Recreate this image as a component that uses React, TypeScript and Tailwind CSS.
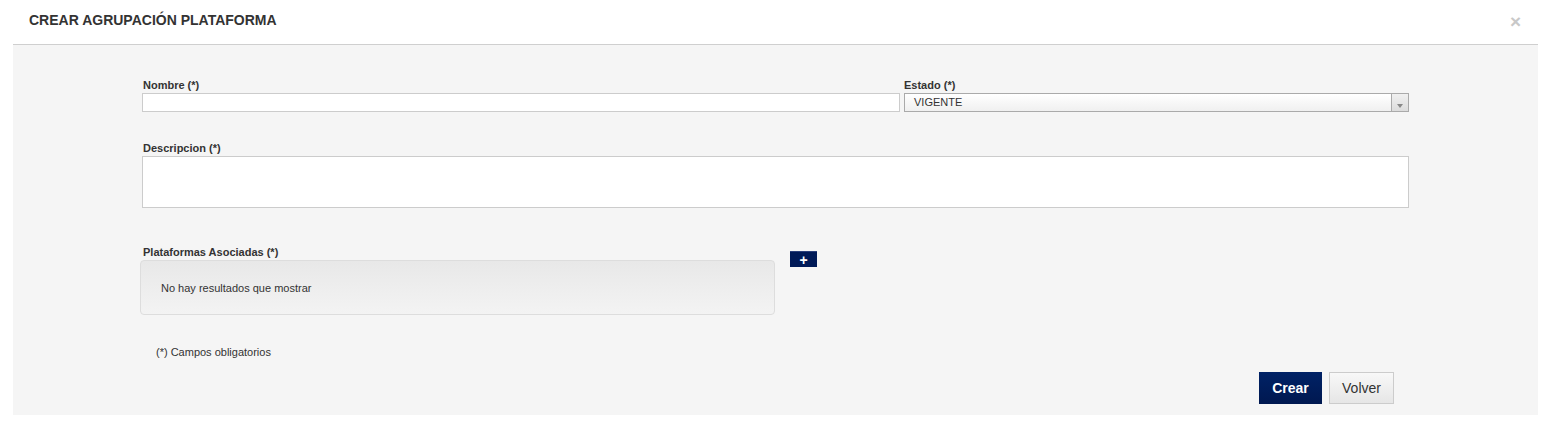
import React from "react";

const font = { fontFamily: '"Liberation Sans", Arial, sans-serif' };

export default function App() {
  return (
    <div className="w-[1562px] h-[434px] bg-white text-[#333]" style={font}>
      <div className="relative h-[44px] pl-[29px] pt-[12px]">
        <h3 className="text-[14px] font-bold leading-[16px] text-[#333]">
          CREAR AGRUPACIÓN PLATAFORMA
        </h3>
        <span className="absolute left-[1510px] top-[12px] text-[19px] font-bold leading-[20px] text-[#c8c8c8]">
          ×
        </span>
      </div>
      <div className="ml-[13px] w-[1525px] h-[371px] bg-[#f5f5f5] border-t border-[#cfcfcf] pl-[129px] pr-[129px] pt-[33px]">
        <div className="flex gap-[4px]">
          <div className="w-[758px]">
            <label className="block pl-[1px] text-[11px] font-bold leading-[14px] mb-[1px]">
              Nombre (*)
            </label>
            <div className="h-[19px] bg-white border border-[#cccccc]" />
          </div>
          <div className="w-[505px]">
            <label className="block text-[11px] font-bold leading-[14px] mb-[1px]">
              Estado (*)
            </label>
            <div className="flex h-[19px] border border-[#aaaaaa] bg-gradient-to-b from-white to-[#f0f0f0]">
              <span className="flex-1 pl-[9px] text-[11px] leading-[17px]">VIGENTE</span>
              <span className="w-[17px] flex items-end justify-center pb-[3px] border-l border-[#aaaaaa] bg-gradient-to-b from-[#f0f0f0] to-[#dcdcdc]">
                <span className="w-0 h-0 border-l-[3px] border-r-[3px] border-t-[4px] border-l-transparent border-r-transparent border-t-[#888]" />
              </span>
            </div>
          </div>
        </div>

        <div className="mt-[29px]">
          <label className="block pl-[1px] text-[11px] font-bold leading-[14px] mb-[1px]">
            Descripcion (*)
          </label>
          <div className="h-[52px] bg-white border border-[#cccccc]" />
        </div>

        <div className="mt-[37px] flex items-start">
          <div className="w-[635px] -ml-[2px]">
            <label className="block pl-[3px] text-[11px] font-bold leading-[14px] mb-[1px]">
              Plataformas Asociadas (*)
            </label>
            <div className="h-[55px] rounded-[4px] border border-[#dddddd] bg-gradient-to-b from-[#e8e8e8] to-[#f3f3f3] pl-[20px] pt-[20px] text-[11px] leading-[14px]">
              No hay resultados que mostrar
            </div>
          </div>
          <button className="ml-[15px] mt-[6px] w-[27px] h-[16px] bg-[#001a57] border-t border-[#2a3f7a] flex items-center justify-center text-white text-[14px] font-bold leading-none">
            +
          </button>
        </div>

        <p className="mt-[30px] pl-[14px] text-[11px] leading-[14px]">(*) Campos obligatorios</p>

        <div className="flex justify-end gap-[7px] mt-[13px] pr-[15px]">
          <button className="w-[63px] h-[32px] bg-gradient-to-b from-[#002266] to-[#001850] text-white text-[14px] font-bold">
            Crear
          </button>
          <button className="w-[65px] h-[32px] border border-[#cccccc] bg-gradient-to-b from-[#f8f8f8] to-[#e6e6e6] text-[14px] text-[#333]">
            Volver
          </button>
        </div>
      </div>
    </div>
  );
}
